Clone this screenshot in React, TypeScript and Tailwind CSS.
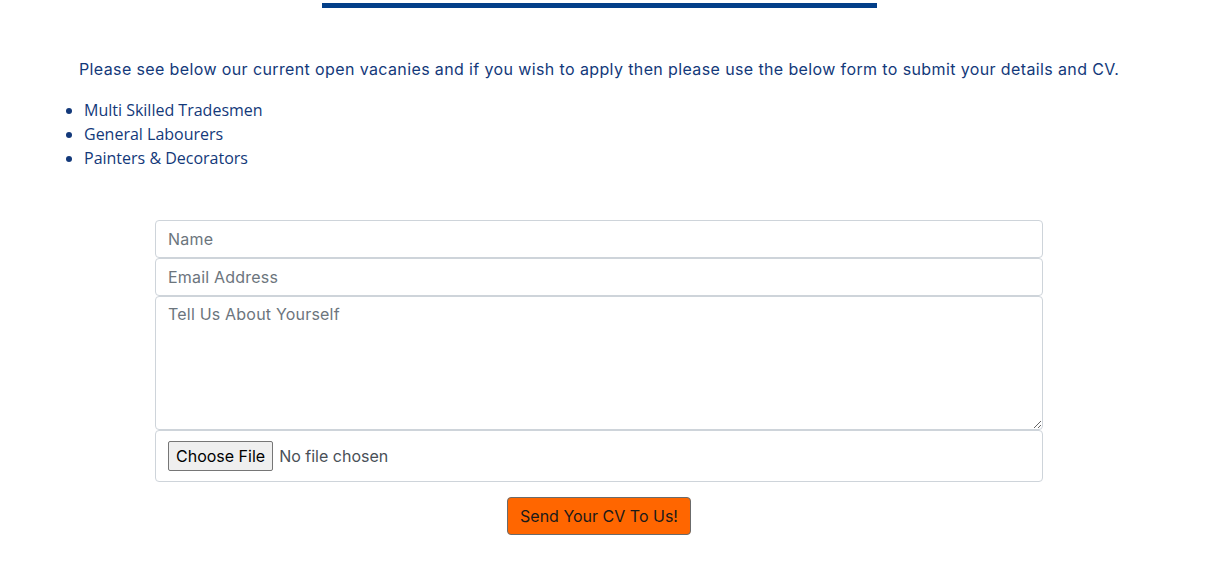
export default function App() {
  return (
    <div className="min-h-screen bg-white">
      <div className="w-[1198px] flex flex-col items-center">
        <div className="mt-[3px] h-[5px] w-[555px] bg-[#033f89]" />

        <p className="mt-[49px] w-full pl-[79px] text-[16px] leading-[24px] text-[#13397a] font-['Inter',sans-serif] tracking-[0.38px]">
          Please see below our current open vacanies and if you wish to apply then please use the below form to submit your details and CV.
        </p>

        <ul className="mt-[17px] w-full pl-[84px] list-disc text-[16px] leading-[24px] text-[#13397a] font-['Open_Sans',sans-serif]">
          <li>Multi Skilled Tradesmen</li>
          <li>General Labourers</li>
          <li>Painters &amp; Decorators</li>
        </ul>

        <form className="mt-[50px] w-[888px] flex flex-col font-['Inter',sans-serif] text-[16px]">
          <input
            type="text"
            placeholder="Name"
            className="h-[38px] px-[12px] pb-[1px] border border-[#ced4da] rounded-[4px] text-[#495057] placeholder:text-[#6c757d] tracking-[0.2px]"
          />
          <input
            type="email"
            placeholder="Email Address"
            className="h-[38px] px-[12px] pb-[1px] border border-[#ced4da] rounded-[4px] text-[#495057] placeholder:text-[#6c757d] tracking-[0.2px]"
          />
          <textarea
            placeholder="Tell Us About Yourself"
            className="h-[134px] px-[12px] py-[5px] border border-[#ced4da] rounded-[4px] text-[#495057] placeholder:text-[#6c757d] tracking-[0.2px]"
          />
          <div className="h-[52px] px-[12px] flex items-center border border-[#ced4da] rounded-[4px]">
            <input
              type="file"
              className="text-[16px] text-[#495057] font-['Inter',sans-serif] file:mr-[6px] file:h-[30px] file:px-[7px] file:border file:border-[#767676] file:rounded-[2px] file:bg-[#efefef] file:text-black file:font-['Inter',sans-serif] file:text-[16px]"
            />
          </div>
          <div className="mt-[15px] flex justify-center">
            <button
              type="button"
              className="h-[38px] px-[12px] bg-[#ff6600] border border-[#6b6b6b] rounded-[4px] text-[16px] text-[#1a1a1a]"
            >
              Send Your CV To Us!
            </button>
          </div>
        </form>
      </div>
    </div>
  );
}
